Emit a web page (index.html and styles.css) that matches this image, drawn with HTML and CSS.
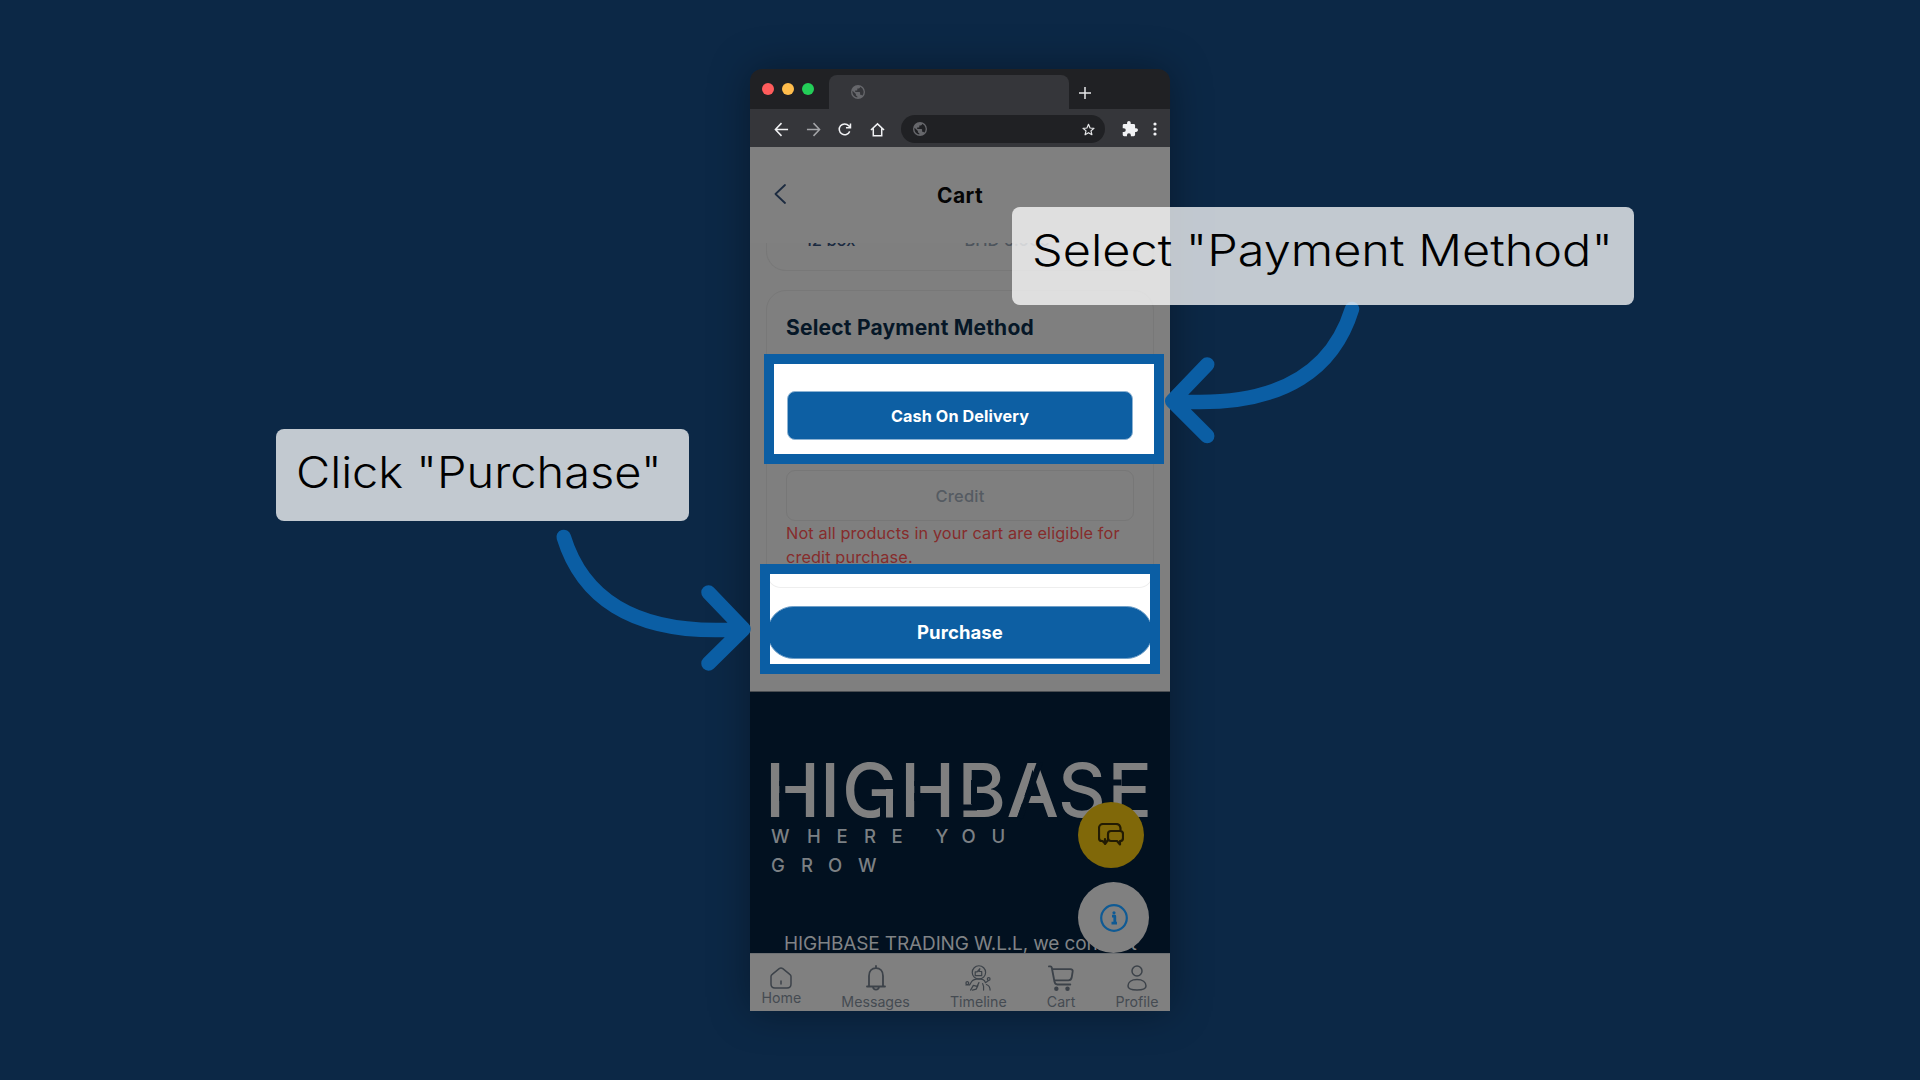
FILE: index.html
```html
<!DOCTYPE html>
<html lang="en">
<head>
<meta charset="utf-8">
<title>Cart – payment guide</title>
<link rel="stylesheet" href="styles.css">
</head>
<body>
<main class="stage">
  <section class="phone">
    <header class="tabs">
      <div class="lights"><i class="red"></i><i class="amber"></i><i class="green"></i></div>
      <div class="tab"><svg class="globe" viewBox="2 2 20 20"><use href="#globe"/></svg></div>
      <svg class="plus" viewBox="0 0 12 12"><path d="M6 0v12M0 6h12"/></svg>
    </header>
    <nav class="toolbar">
      <svg class="tool" viewBox="0 0 16 16"><path d="M15 8H2M8 1.2 1.5 8 8 14.8"/></svg>
      <svg class="tool faded" viewBox="0 0 16 16"><path d="M1 8h13M8 1.2 14.500 8 8 14.800"/></svg>
      <svg class="tool" viewBox="0 0 16 16"><path d="M12.500 10A5.800 5.800 0 1 1 11.500 4L13 6M13.300 1.500V6H8.500"/></svg>
      <svg class="tool" viewBox="0 0 16 16"><path d="M1 8.500 8 2l7 6.500M3.500 7v7.700h9V7"/></svg>
      <div class="address">
        <svg class="globe" viewBox="2 2 20 20"><use href="#globe"/></svg>
        <svg class="star" viewBox="0 0 24 24"><path d="m12 2.500 2.900 6.700 7.200.6-5.500 4.800 1.700 7.100-6.300-3.800-6.300 3.800 1.700-7.100-5.500-4.800 7.200-.6z"/></svg>
      </div>
      <svg class="puzzle" viewBox="1 1 22 22"><path d="M20.500 11H19V7a2 2 0 0 0-2-2h-4V3.500a2.500 2.500 0 0 0-5 0V5H4a2 2 0 0 0-2 2v3.800h1.500a2.700 2.700 0 0 1 0 5.400H2V20c0 1.100.9 2 2 2h3.800v-1.500a2.700 2.700 0 0 1 5.400 0V22H17a2 2 0 0 0 2-2v-4h1.500a2.500 2.500 0 0 0 0-5z"/></svg>
      <svg class="more" viewBox="0 0 4 14"><circle cx="2" cy="2" r="1.600"/><circle cx="2" cy="7" r="1.600"/><circle cx="2" cy="12" r="1.600"/></svg>
    </nav>

    <div class="page">
      <div class="cart-head">
        <svg class="chevron" viewBox="0 0 12 20"><path d="M11 1 1.500 10 11 19"/></svg>
        <h1>Cart</h1>
      </div>
      <div class="scroll">
        <div class="item"><div class="item-row"><span>12 box</span><span class="price">BHD 6.000</span></div></div>
        <div class="card">
          <h2>Select Payment Method</h2>
          <div class="credit">Credit</div>
          <p>Not all products in your cart are eligible for<br>credit purchase.</p>
        </div>
      </div>
      <div class="spot spot-pay"><div class="btn">Cash On Delivery</div></div>
      <div class="spot spot-buy"><div class="edge"></div><div class="pill">Purchase</div></div>
    </div>

    <footer class="brand">
      <svg class="logo" viewBox="0 0 390 110">
        <text class="wordmark" x="-6 49 71 129 186.500 235.500 287 336.500" y="66">HIGHBASE</text>
        <path class="cuts" d="M11.300 30v20M146.300 30v20M203 29v24M191 56.500h15M249 67l20-56M339 31.500h11.500"/>
        <path class="cuts wide" d="M117 45v23"/>
        <path class="spur" d="M118.500 38v28.500"/>
        <text class="tag" x="0 36 65.500 93 120.500 147.500 164.500 190.500 220.500" y="92">WHERE YOU</text>
        <text class="tag" x="0 30 57 87" y="120.500">GROW</text>
      </svg>
      <p>HIGHBASE TRADING W.L.L, we connect</p>
      <div class="fab chat"><svg viewBox="0 0 26 24"><path d="M7 16v4.500L4.500 18H4a3 3 0 0 1-3-3V5a4 4 0 0 1 4-4h13c3 0 4 1 4.500 4v2M7 17v4l3-4"/><path d="M13 8h9a3 3 0 0 1 3 3v4a3 3 0 0 1-3 3v3.500L19 18h-6a3 3 0 0 1-3-3v-4a3 3 0 0 1 3-3z"/></svg></div>
      <div class="fab info"><svg viewBox="0 0 28 28"><circle cx="14" cy="14" r="12.800"/><path class="i" d="M12 12.200h2.800V19M11.500 19.200h5.500"/><circle class="dot" cx="14" cy="8.800" r="1.600"/></svg></div>
    </footer>

    <nav class="bottom">
      <a class="home"><svg viewBox="0 0 22 22"><path d="M1 9.500c0-1 .4-1.600 1.200-2.200l7-5.600c1.100-.9 2.500-.9 3.600 0l7 5.600c.8.600 1.200 1.200 1.200 2.200V17c0 2.500-1.500 4-4 4H5c-2.500 0-4-1.500-4-4zM11 14v3"/></svg>Home</a>
      <a><svg viewBox="0 0 20 26"><path class="bell" d="M1 21.500h18M3 21V11C3 6 6 3.200 10 3.200S17 6 17 11v10M10 1v2M7 22c.4 3.500 5.600 3.500 6 0"/></svg>Messages</a>
      <a><svg viewBox="0 0 28 28"><g class="thin"><circle cx="15" cy="8" r="7.200"/><path d="M11 7.500v4h7V7h-3l1-3-3 3.500zM7 18c2-3 5-3 8-3s6 1 7 4M1 21.500h4l2-3.500M6 27l3-5 4 1 2-4M14 22l-2 4-4 1M20 27v-4l-1-3M27 27c0-3-1-5-4-6M25 17l-3 2"/><circle cx="2.500" cy="19.500" r="1.500"/><circle cx="25.500" cy="15" r="1.500"/></g></svg>Timeline</a>
      <a><svg viewBox="0 0 28 28"><path class="thick" d="M1 1.500h1.500c1 0 1.400.5 1.600 1.500L7 18c.3 1.800 1.200 3 3 3h14M5 4.500h19c2 0 3 1 2.500 3l-1 6c-.4 2-1.500 3-3.500 3H7"/><circle class="fill" cx="9" cy="25.500" r="2.400"/><circle class="fill" cx="21" cy="25.500" r="2.400"/></svg>Cart</a>
      <a><svg viewBox="0 0 20 26"><circle cx="10" cy="6" r="5"/><path d="M1 21c0-4 3.500-6.500 9-6.500s9 2.500 9 6.500c0 3-3.500 4-9 4s-9-1-9-4z"/></svg>Profile</a>
    </nav>
  </section>

  <svg class="arrows" viewBox="0 0 1920 1080">
    <defs>
      <path id="globe" d="M12 2a10 10 0 1 0 0 20 10 10 0 0 0 0-20zm-1 17.900A8 8 0 0 1 4.200 10.200L9 15v1c0 1.100.9 2 2 2zm6.900-2.500A2 2 0 0 0 16 16h-1v-3a1 1 0 0 0-1-1H8v-2h2a1 1 0 0 0 1-1V7h2a2 2 0 0 0 2-2v-.4a8 8 0 0 1 2.900 12.800z"/>
    </defs>
    <path d="M563.700 537C580 590 625 638 743.500 629M708.500 592.500 743.500 629l-35 34.500"/>
    <path d="M1352 309C1335.700 362 1290.700 410 1172.200 401M1207.200 364.500l-35 36.500 35 35"/>
  </svg>
  <div class="label label-pay"><span>Select "Payment Method"</span></div>
  <div class="label label-buy"><span>Click "Purchase"</span></div>
</main>
</body>
</html>
```
FILE: styles.css
```css
* { box-sizing: border-box; margin: 0; padding: 0; }
body { width: 1920px; height: 1080px; overflow: hidden; background: #0c2846; font-family: Inter, "Liberation Sans", sans-serif; }
svg { display: block; fill: none; stroke-linecap: round; stroke-linejoin: round; }
.stage { position: relative; height: 1080px; display: flex; justify-content: center; padding-top: 69px; }
.phone { width: 420px; height: 942px; display: flex; flex-direction: column; border-radius: 12px 12px 0 0; box-shadow: 0 0 40px rgba(0, 0, 0, .35); }

.tabs { height: 40px; background: #202124; border-radius: 12px 12px 0 0; display: flex; }
.lights { width: 79px; padding: 14px 0 0 11.500px; display: flex; gap: 8px; }
.lights i { width: 12px; height: 12px; border-radius: 50%; }
.red { background: #ff5c5c; }
.amber { background: #ffbd4c; }
.green { background: #23ce58; }
.tab { width: 240px; height: 34px; margin-top: 6px; padding: 10px 0 0 21.500px; border-radius: 8px 8px 0 0; background: #35363a; }
.globe { width: 14px; height: 14px; fill: #66676b; stroke: none; }
.plus { width: 12px; height: 12px; margin: 18px 0 0 9.500px; stroke: #e6e7e9; stroke-width: 1.500; stroke-linecap: butt; }

.toolbar { height: 38px; background: #35363a; display: flex; align-items: center; padding: 2px 0 0 24px; }
.tool { width: 15px; height: 15px; margin-right: 17px; stroke: #f1f2f4; stroke-width: 1.600; stroke-linecap: butt; stroke-linejoin: miter; }
.faded { stroke: #a4a5a8; }
.address { width: 204px; height: 28px; margin-left: -1px; border-radius: 14px; background: #202124; display: flex; align-items: center; justify-content: space-between; padding: 0 10px 0 12px; }
.star { width: 13px; height: 13px; stroke: #e6e7e9; stroke-width: 2.200; }
.puzzle { width: 16px; height: 16px; margin: 0 15px 0 17px; fill: #f1f2f4; }
.more { width: 4px; height: 14px; fill: #f1f2f4; }

.page { position: relative; height: 545px; background: #7f7f7f; border-bottom: 1px solid #4a4e52; display: flex; flex-direction: column; }
.cart-head { height: 96px; background: #808080; display: grid; grid-template-columns: 60px 300px 60px; align-items: start; padding-top: 37px; }
.chevron { width: 12px; height: 20px; margin-left: 24px; stroke: #1c2b40; stroke-width: 1.800; }
h1 { padding-top: 1px; font-size: 21px; line-height: 22px; font-weight: 650; letter-spacing: .4px; text-align: center; color: #050505; }
.scroll { height: 448px; overflow: hidden; padding: 0 16px; }
.item { height: 28px; border: 1px solid #787878; border-top: 0; border-radius: 0 0 20px 20px; overflow: hidden; }
.item-row { display: flex; gap: 109px; margin-top: -12px; padding-left: 38px; font-size: 16.500px; line-height: 19px; font-weight: 500; color: #1b2a40; }
.price { color: #4d545c; }
.card { height: 314px; margin-top: 19px; border: 1px solid #787878; border-radius: 20px; padding: 0 19px; }
h2 { padding-top: 24px; font-size: 21px; line-height: 26px; font-weight: 650; letter-spacing: .2px; color: #061727; white-space: nowrap; }
.credit { height: 51px; margin: 129px 0 0; border: 1px solid #777; border-radius: 9px; text-align: center; font-size: 16.500px; line-height: 51px; font-weight: 500; letter-spacing: .2px; color: #555b62; }
.card p { font-size: 16.300px; line-height: 23.500px; padding-top: 1px; letter-spacing: .12px; color: #862c2c; white-space: nowrap; }

.spot { position: absolute; width: 400px; height: 110px; border: 10px solid #0b5ea4; background: #fff; overflow: hidden; color: #fff; font-weight: 650; text-align: center; }
.spot-pay { left: 14px; top: 207px; padding: 27px 21px 0 13px; }
.spot-buy { left: 10px; top: 417px; }
.btn { height: 49px; border-radius: 8px; background: #0d5fa3; border: 1px solid #8db3d3; font-size: 16.200px; line-height: 48px; letter-spacing: .1px; }
.edge { height: 14px; margin: 0 -3px; border: 1px solid #eee; border-top: 0; border-radius: 0 0 20px 20px; }
.pill { height: 53px; margin: 18px -3px 0; border-radius: 27px; background: #0d5fa3; border: 1px solid #6f9fc8; font-size: 18.500px; line-height: 50px; letter-spacing: .1px; }

.brand { position: relative; height: 261px; overflow: hidden; background: #021120; color: #808386; }
.logo { width: 390px; height: 110px; margin: 59px 0 0 21px; overflow: visible; }
.wordmark { font-size: 74px; font-weight: 450; fill: #808080; }
.cuts { stroke: #021120; stroke-width: 6; stroke-linecap: butt; }
.wide { stroke-width: 16; }
.spur { stroke: #808080; stroke-width: 7; stroke-linecap: butt; }
.tag { font-size: 18.500px; font-weight: 450; fill: #7c8084; }
.brand p { margin: 71px 0 0 34px; font-size: 19px; line-height: 24px; letter-spacing: -.13px; white-space: nowrap; }
.fab { position: absolute; border-radius: 50%; display: grid; place-items: center; }
.chat { left: 328px; top: 110px; width: 66px; height: 66px; background: #806809; }
.chat svg { width: 26px; height: 24px; stroke: #221b03; stroke-width: 2.200; }
.info { left: 328px; top: 190px; width: 71px; height: 71px; background: #808080; }
.info svg { width: 28px; height: 28px; stroke: #0f5a94; stroke-width: 2.200; }
.info .i { stroke-width: 2.800; stroke-linecap: butt; }
.info .dot { fill: #0f5a94; stroke: none; }

.bottom { height: 58px; background: #808080; border-top: 1px solid #6d7073; display: flex; justify-content: space-between; padding: 11px 11.500px 0; font-size: 14.200px; line-height: 18px; color: #454b52; }
.bottom a { display: flex; flex-direction: column; align-items: center; gap: 2px; }
.bottom svg { height: 27px; width: auto; stroke: #3c4249; stroke-width: 1.500; }
.bottom .home { gap: 0; }
.bottom .home svg { height: 22px; margin-top: 2px; }
.bell { stroke-width: 1.800; }
.thin { stroke-width: 1.300; }
.thick { stroke-width: 2; }
.bottom .fill { fill: #3c4249; stroke: none; }

.arrows { position: absolute; left: 0; top: 0; width: 1920px; height: 1080px; stroke: #0b5ea4; stroke-width: 14.500; }
.label { position: absolute; border-radius: 8px; background: rgba(255, 255, 255, .75); color: #000; font-size: 43px; line-height: 52px; font-weight: 300; white-space: nowrap; }
.label span { display: inline-block; transform-origin: 0 0; }
.label-pay { left: 1012px; top: 207px; width: 622px; height: 98px; padding: 17px 20px; }
.label-pay span { transform: scaleX(1.131); }
.label-buy { left: 276px; top: 429px; width: 413px; height: 92px; padding: 17px 20px; }
.label-buy span { transform: scaleX(1.092); }
```
